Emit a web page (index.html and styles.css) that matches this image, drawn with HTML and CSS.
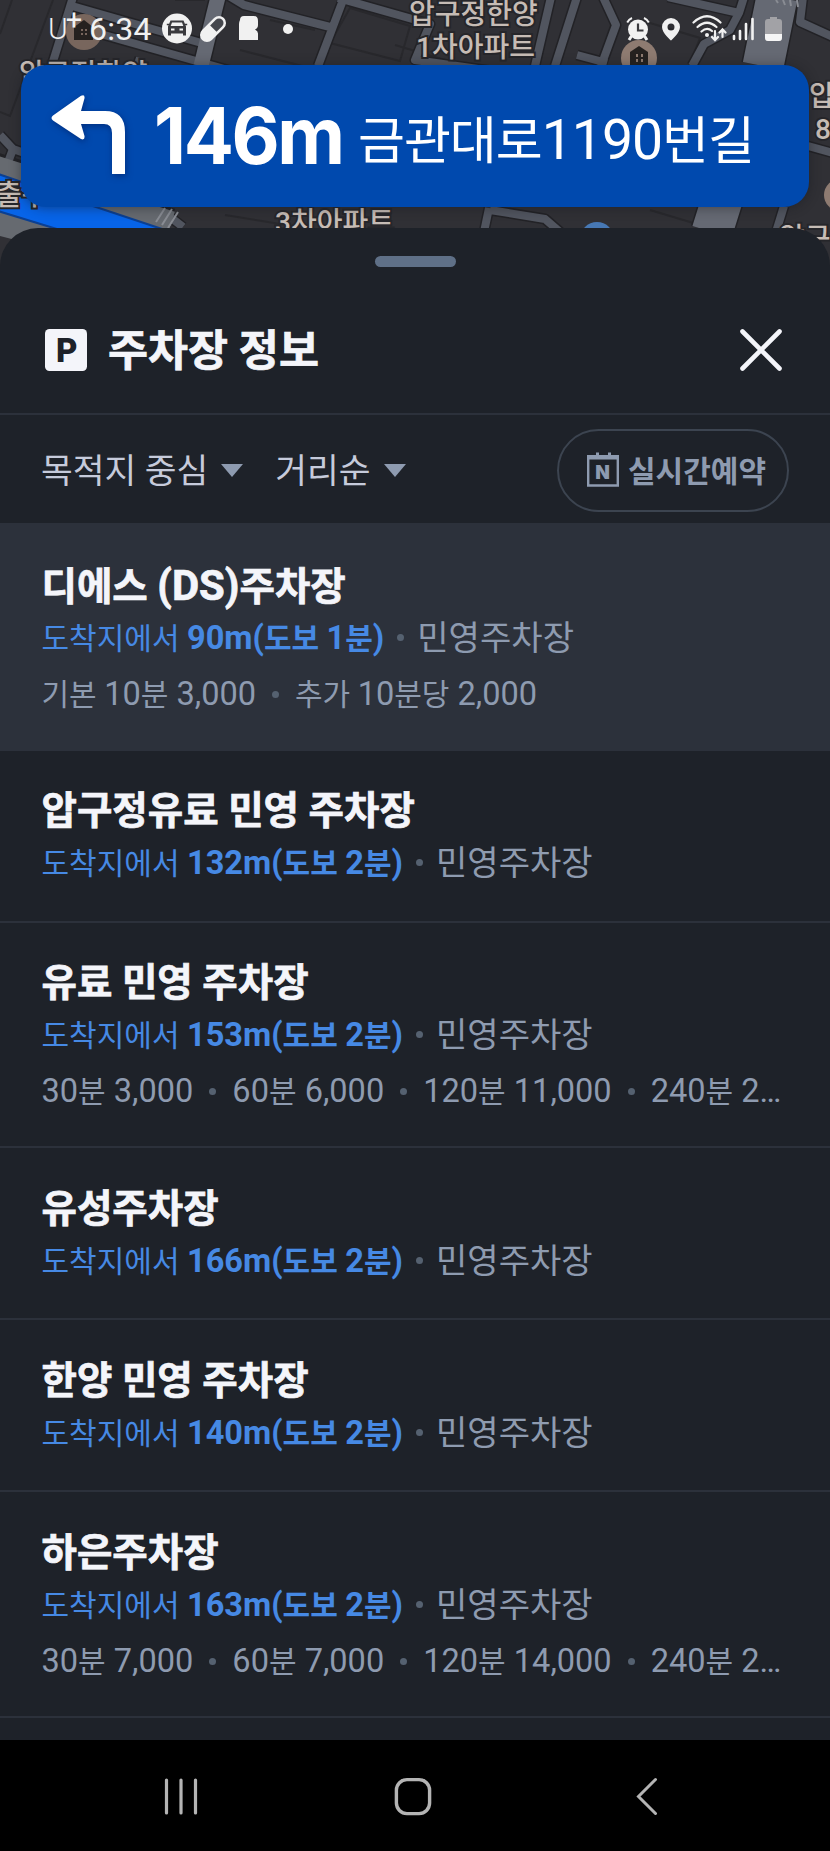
FILE: index.html
```html
<!DOCTYPE html>
<html lang="ko">
<head>
<meta charset="utf-8">
<title>주차장 정보</title>
<link rel="stylesheet" href="styles.css">
</head>
<body>
<div class="screen">
  <svg class="map" width="830" height="290" viewBox="0 0 830 290" aria-hidden="true">
    <rect width="830" height="290" fill="#303035"/>
    <g fill="none" stroke="#28282c" stroke-width="2">
      <path d="M53 0L10 116L0 112M12 0L0 34M100 70l70 18M350 8l60 18-10 35-70-18zM395 45l60 18M640 20l60 18-12 30M205 0l-30 0M225 215l80 13M240 50l70 18M650 210l60 18M270 20l45 10M500 40l30 10M560 60l10-40"/>
    </g>
    <g fill="none" stroke="#222226" stroke-linejoin="round">
      <path stroke-width="11" d="M73 -3L51 68M72 6L205 44M62 23L235 72M140 58l-4 12M229 -4L244 5L334 28M343 0L318 66M338 -2L430 24L415 60L520 75M551 -3L535 66M577 -3L555 66M603 -3L616 25L601 66M577 55l30 8M668 -3L739 13L744 -3M739 13L730 30L704 44L692 66M803 -3L800 22L833 37M808 146L833 153M0 135L13 149L30 155M13 149L7 165M489 208L484 232M490 210L545 219L560 232M784 206L776 232M165 213l18 14"/>
      <path stroke-width="18" d="M218 -3L201 66"/>
      <path stroke-width="44" d="M777 -3L763 66M722 200L712 232"/>
      <path stroke-width="34" d="M-10 168L170 225"/>
    </g>
    <g fill="none" stroke="#51555f" stroke-linejoin="round">
      <path stroke-width="8" d="M73 -3L51 68M72 6L205 44M62 23L235 72M140 58l-4 12M229 -4L244 5L334 28M343 0L318 66M338 -2L430 24L415 60L520 75M551 -3L535 66M577 -3L555 66M603 -3L616 25L601 66M577 55l30 8M668 -3L739 13L744 -3M739 13L730 30L704 44L692 66M803 -3L800 22L833 37M808 146L833 153M0 135L13 149L30 155M13 149L7 165M489 208L484 232M490 210L545 219L560 232M784 206L776 232M165 213l18 14"/>
      <path stroke="#656973" stroke-width="15" d="M218 -3L201 66"/>
      <path stroke="#656973" stroke-width="41" d="M777 -3L763 66M722 200L712 232"/>
      <path stroke="#666a70" stroke-width="32" d="M-10 170L170 227"/>
      <path stroke="#666a70" stroke-width="30" d="M-10 218L60 236"/>
    </g>
    <path d="M-2 174L60 195L165 230H60L-2 211Z" fill="#0764e8" stroke="#0b3f91" stroke-width="2"/>
    <path d="M156 222l9-14M162 225l10-16M168 228l10-16M776 0l2 3M783 0l2 5M790 0l1 6M797 0l1 7" stroke="#898c93" stroke-width="2"/>
    <circle cx="84" cy="32" r="18" fill="#78665d"/>
    <path d="M74 40V27l10-7 9 7v13z" fill="#25211f"/>
    <path d="M81 29h2v2h-2zm4 0h2v2h-2zm-4 4h2v2h-2zm4 0h2v2h-2z" fill="#78665d"/>
    <circle cx="639" cy="58" r="18" fill="#8e7b71"/>
    <path d="M630 66V52l9-6 9 6v14z" fill="#25211f"/>
    <path d="M636 54h2v3h-2zm5 0h2v3h-2zm-5 5h2v3h-2zm5 0h2v3h-2z" fill="#8e7b71"/>
    <circle cx="840" cy="195" r="16" fill="#8e7b71"/>
    <circle cx="597" cy="239" r="17" fill="#4778b4"/>
    <g class="map-label">
      <text x="409" y="24">압구정한양</text>
      <text x="416" y="57">1차아파트</text>
      <text x="19" y="84">압구정한양</text>
      <text x="-4" y="205">출구</text>
      <text x="275" y="232">3차아파트</text>
      <text x="809" y="106">압</text>
      <text x="815" y="139">8</text>
      <text x="779" y="248">압구</text>
    </g>
  </svg>

  <div class="status">
    <span class="carrier">U<sup>+</sup></span>
    <span class="clock">6:34</span>
    <svg class="car" width="30" height="31" viewBox="0 0 30 31"><circle cx="15" cy="15.500" r="15" fill="#f1f1f1"/><path d="M8.500 7.500h13l2.500 6v9h-3v-2H9v2H6v-9z" fill="#3a3a3e"/><path d="M10 9.500h10l1.300 3.500H8.700z" fill="#f1f1f1"/><path d="M9 15.500h3.500v2H9zM17.500 15.500H21v2h-3.500z" fill="#f1f1f1"/><path d="M4.800 11.500h2.500M22.700 11.500h2.500" stroke="#3a3a3e" stroke-width="1.500"/></svg>
    <svg class="pill" width="28" height="28" viewBox="0 0 28 28"><g transform="rotate(-45 14 14)"><rect x="-1.500" y="7" width="31" height="14" rx="7" fill="#f1f1f1"/><path d="M14.500 9.500h8a4.500 4.500 0 0 1 0 9h-8z" fill="#45474d"/></g></svg>
    <svg class="app" width="20" height="25" viewBox="0 0 20 25"><path d="M1 4Q1 0 5 0h10q4 0 4 5v4q0 3-3 4.500 3 1.500 3 4V24H0V8q0-2 1-4z" fill="#f1f1f1"/></svg>
    <i class="more"></i>
    <span class="spacer"></span>
    <svg class="alarm" width="24" height="24" viewBox="0 0 24 24"><circle cx="12" cy="12.500" r="10" fill="#f1f1f1"/><path d="M5.500 19l-2.500 4M18.500 19l2.500 4" stroke="#f1f1f1" stroke-width="3"/><path d="M1.200 5.500Q3 2.300 6 1M22.800 5.500Q21 2.300 18 1" stroke="#f1f1f1" stroke-width="2" fill="none"/><path d="M12 6.500v7h5.500" stroke="#3a3a3e" stroke-width="2.200" fill="none"/></svg>
    <svg class="pin" width="20" height="24" viewBox="0 0 20 24"><path fill-rule="evenodd" d="M10 1a9 9 0 0 0-9 9c0 6 9 13.500 9 13.500S19 16 19 10a9 9 0 0 0-9-9zm0 5.500a3.500 3.500 0 1 1 0 7 3.500 3.500 0 0 1 0-7z" fill="#f1f1f1"/></svg>
    <svg class="wifi" width="35" height="27" viewBox="0 0 35 27"><g fill="none" stroke="#f1f1f1" stroke-width="2.200" stroke-linecap="round"><path d="M1.500 7.500Q15 -5 28.500 7.500M5.500 12Q15 3.500 24.500 12M9.500 16.500Q15 11.500 20 16"/><path d="M23 16v9m-3-3 3 3.200 3-3.200M30.500 22v-7.500m-3 3 3-3.200 3 3.200"/></g><circle cx="15" cy="20" r="2" fill="#f1f1f1"/></svg>
    <svg class="signal" width="22" height="24" viewBox="0 0 22 24"><path d="M2 19v3M8 14v8M14 7v15M20.500 2v20" stroke="#f1f1f1" stroke-width="2.600" stroke-linecap="round"/></svg>
    <svg class="battery" width="17" height="24" viewBox="0 0 17 24"><path d="M5 2V0h7v2h2q3 0 3 3v15q0 4-3 4H3q-3 0-3-4V5q0-3 3-3z" fill="#a2a2a6"/><path d="M0 17h17v3.500Q17 24 14 24H3q-3 0-3-3.500z" fill="#f5f5f5"/></svg>
  </div>

  <div class="banner">
    <svg class="turn" width="78" height="82" viewBox="0 0 78 82"><path d="M2 20.500L30 .8q4-2 3.500 2.500L30 16h24q20 0 20 21v42H61V38q0-9-8-9H30l3.500 12q.5 4.500-3.500 3L2 25.500q-3-2.500 0-5z" fill="#fff"/></svg>
    <span class="distance">146m</span>
    <span class="road">금관대로<b class="n">1190</b>번길</span>
  </div>

  <section class="sheet">
    <div class="handle"></div>
    <header class="header">
      <svg width="42" height="42" viewBox="0 0 42 42"><rect width="42" height="42" rx="4.500" fill="#f4f5fa"/><text class="park-mark" x="11" y="32.500">P</text></svg>
      <h1>주차장 정보</h1>
      <svg class="close" width="42" height="42" viewBox="0 0 42 42"><path d="M2.500 2.500l37 37M39.500 2.500l-37 37" stroke="#f4f5fa" stroke-width="4.600" stroke-linecap="round"/></svg>
    </header>
    <div class="filters">
      <span class="filter">목적지 중심<i class="caret"></i></span>
      <span class="filter">거리순<i class="caret"></i></span>
      <button class="reserve">
        <svg width="32" height="35" viewBox="0 0 32 35"><path d="M1.200 5h29.600v28.500H1.200z" fill="none" stroke="#8e9bb0" stroke-width="2.400"/><path d="M0 3h32v4.500H0zM9 .5h3V4H9zM21 .5h3V4h-3z" fill="#8e9bb0"/><text class="reserve-mark" x="8.300" y="26.500">N</text></svg>
        실시간예약
      </button>
    </div>

    <ul class="list">
      <li class="item selected">
        <h2>디에스 <span class="n">(DS)</span>주차장</h2>
        <p class="where">도착지에서 <b><span class="n">90m(</span>도보 <span class="n">1</span>분<span class="n">)</span></b><i class="dot"></i><span class="kind">민영주차장</span></p>
        <p class="price">기본 <span class="n">10</span>분<span class="n"> 3,000</span><i class="dot"></i>추가 <span class="n">10</span>분당<span class="n"> 2,000</span></p>
      </li>
      <li class="item">
        <h2>압구정유료 민영 주차장</h2>
        <p class="where">도착지에서 <b><span class="n">132m(</span>도보 <span class="n">2</span>분<span class="n">)</span></b><i class="dot"></i><span class="kind">민영주차장</span></p>
      </li>
      <li class="item">
        <h2>유료 민영 주차장</h2>
        <p class="where">도착지에서 <b><span class="n">153m(</span>도보 <span class="n">2</span>분<span class="n">)</span></b><i class="dot"></i><span class="kind">민영주차장</span></p>
        <p class="price"><span class="n">30</span>분<span class="n"> 3,000</span><i class="dot"></i><span class="n">60</span>분<span class="n"> 6,000</span><i class="dot"></i><span class="n">120</span>분<span class="n"> 11,000</span><i class="dot"></i><span class="n">240</span>분<span class="n"> 2…</span></p>
      </li>
      <li class="item">
        <h2>유성주차장</h2>
        <p class="where">도착지에서 <b><span class="n">166m(</span>도보 <span class="n">2</span>분<span class="n">)</span></b><i class="dot"></i><span class="kind">민영주차장</span></p>
      </li>
      <li class="item">
        <h2>한양 민영 주차장</h2>
        <p class="where">도착지에서 <b><span class="n">140m(</span>도보 <span class="n">2</span>분<span class="n">)</span></b><i class="dot"></i><span class="kind">민영주차장</span></p>
      </li>
      <li class="item">
        <h2>하은주차장</h2>
        <p class="where">도착지에서 <b><span class="n">163m(</span>도보 <span class="n">2</span>분<span class="n">)</span></b><i class="dot"></i><span class="kind">민영주차장</span></p>
        <p class="price"><span class="n">30</span>분<span class="n"> 7,000</span><i class="dot"></i><span class="n">60</span>분<span class="n"> 7,000</span><i class="dot"></i><span class="n">120</span>분<span class="n"> 14,000</span><i class="dot"></i><span class="n">240</span>분<span class="n"> 2…</span></p>
      </li>
    </ul>
  </section>

  <nav class="navbar">
    <svg width="36" height="40" viewBox="0 0 36 40"><path d="M3.500 4v33M18 4v33M32.500 4v33" stroke="#b4b4b4" stroke-width="3.200" stroke-linecap="round"/></svg>
    <svg width="38" height="40" viewBox="0 0 38 40"><rect x="2.400" y="3.600" width="33.200" height="34" rx="10.500" fill="none" stroke="#b4b4b4" stroke-width="3.400"/></svg>
    <svg class="back" width="32" height="40" viewBox="0 0 32 40"><path d="M28.500 3.500L11.500 20.500l17 17" fill="none" stroke="#b4b4b4" stroke-width="3" stroke-linecap="round"/></svg>
  </nav>
</div>
</body>
</html>
```
FILE: styles.css
```css
* { box-sizing: border-box; margin: 0; padding: 0; }

body {
  font-family: Roboto, "Noto Sans CJK KR", sans-serif;
  background: #1e2229;
}

.screen {
  position: relative;
  display: flex;
  flex-direction: column;
  width: 830px;
  height: 1851px;
  overflow: hidden;
}

/* Latin runs are set slightly larger than the Hangul around them */
.n { font-size: 1.085em; font-weight: inherit; white-space: pre; }

/* Map */
.map { position: absolute; top: 0; left: 0; }
.map-label {
  font: 500 28px Roboto, "Noto Sans CJK KR", sans-serif;
  fill: #c6bcb5;
  stroke: #26262a;
  stroke-width: 4px;
  paint-order: stroke;
}

/* Status bar */
.status {
  position: relative;
  display: flex;
  align-items: center;
  height: 65px;
  padding: 0 48px 8px 48px;
  color: #f1f1f1;
}
.carrier { width: 41px; font-size: 30px; font-weight: 300; line-height: 30px; white-space: nowrap; }
.carrier sup { position: relative; top: 2px; left: -2px; font-size: 29px; font-weight: 400; line-height: 0; }
.clock { width: 73px; font-size: 32px; font-weight: 400; line-height: 30px; letter-spacing: .3px; }
.pill { margin-left: 7px; }
.app { margin-left: 12px; }
.more { width: 10px; height: 10px; margin-left: 24px; border-radius: 50%; background: #f1f1f1; }
.spacer { flex: 1; }
.pin { margin-left: 11px; }
.wifi { margin-left: 11px; }
.signal { margin-left: 5px; }
.battery { margin-left: 11px; }

/* Turn banner */
.banner {
  position: relative;
  display: flex;
  align-items: center;
  height: 142px;
  margin: 0 21px;
  padding-left: 30px;
  border-radius: 25px;
  background: #0049ae;
  box-shadow: 0 1px 12px rgba(20, 22, 28, .45);
  color: #fff;
  white-space: nowrap;
}
.turn { margin-top: -1px; filter: drop-shadow(1px 2px 3px rgba(0, 20, 80, .5)); }
.distance {
  width: 204px;
  margin-left: 25px;
  font: 700 78px/100px Inter, sans-serif;
  letter-spacing: -2.500px;
  transform: scaleX(.952);
  transform-origin: left;
}
.road { padding-top: 10px; font-size: 51px; line-height: 100px; font-weight: 400; letter-spacing: -1px; }

/* Sheet */
.sheet {
  position: relative;
  flex: 1;
  margin-top: 21px;
  border-radius: 38px 38px 0 0;
  background: #1e2229;
}
.handle { width: 81px; height: 11px; margin: 0 auto; border-radius: 6px; background: #5f7087; transform: translateY(28px); }
.header {
  display: flex;
  align-items: center;
  height: 176px;
  padding: 48px 48px 0 45px;
  border-bottom: 2px solid #2c313b;
}
.header h1 {
  margin-left: 21px;
  padding-top: 3px;
  color: #f4f5fa;
  font-size: 43.500px;
  font-weight: 700;
  line-height: 60px;
  -webkit-text-stroke: .7px #f4f5fa;
}
.park-mark { font: 900 33px Roboto, sans-serif; fill: #1e2229; }
.close { margin-left: auto; }

.filters {
  display: flex;
  align-items: center;
  height: 108px;
  padding: 3px 41px 0 41px;
}
.filter { display: flex; align-items: center; margin-right: 32px; color: #c6cbdb; font-size: 34.500px; line-height: 50px; }
.caret {
  margin-left: 13px;
  border: solid transparent;
  border-width: 13px 11.500px 0;
  border-top-color: #8e9bb0;
}
.reserve {
  display: flex;
  align-items: center;
  gap: 9px;
  width: 232px;
  height: 83px;
  margin-left: auto;
  padding: 0 0 3px 28px;
  border: 2px solid #3c4450;
  border-radius: 42px;
  background: none;
  color: #8e9bb0;
  font: 700 30px/44px "Noto Sans CJK KR", sans-serif;
  white-space: nowrap;
}
.reserve-mark { font: 900 19px Inter, sans-serif; fill: #8e9bb0; }

/* Parking list */
.list { list-style: none; }
.item {
  padding: 34.500px 41px 32.500px 41.500px;
  border-bottom: 2px solid #2c313b;
  color: #8e9bb0;
  white-space: nowrap;
}
.selected { padding-top: 36.500px; background: #2c313b; }
.item h2 {
  height: 52px;
  color: #f4f5fa;
  font-size: 38.500px;
  font-weight: 700;
  line-height: 52px;
  -webkit-text-stroke: .7px #f4f5fa;
}
.where { display: flex; align-items: baseline; height: 51px; color: #4689e4; font-size: 30px; line-height: 51px; }
.where, .where b { white-space: pre; }
.kind { position: relative; top: 1px; color: #8e9bb0; font-size: 34.100px; }
.dot { display: inline-block; width: 7px; height: 7px; margin: 0 13px; border-radius: 50%; background: #556170; }
.where .dot { align-self: center; }
.price { height: 53.600px; padding-top: 4px; font-size: 30px; line-height: 54px; }
.price .dot { margin: 0 16px; position: relative; top: -7px; }

/* System navigation */
.navbar {
  position: relative;
  display: flex;
  justify-content: space-between;
  align-items: center;
  height: 111px;
  padding: 0 171px 0 163px;
  background: #000;
}
```
